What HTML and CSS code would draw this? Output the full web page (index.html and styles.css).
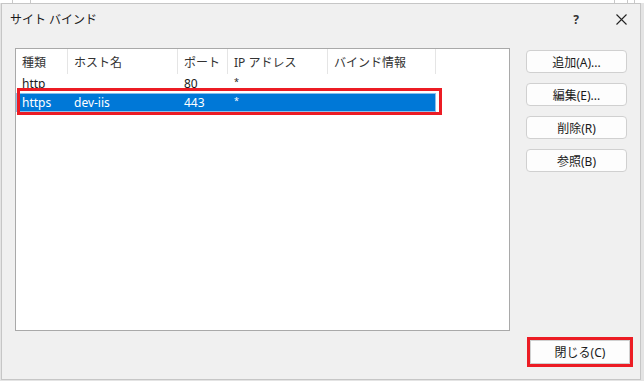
FILE: index.html
```html
<!DOCTYPE html>
<html lang="ja">
<head>
    <meta charset="UTF-8">
    <title>サイト バインド</title>
    <link rel="stylesheet" href="styles.css">
</head>
<body>
    <div class="backdrop">
        <span class="line l1"></span>
        <span class="line l2"></span>
        <span class="line l3"></span>
        <span class="line l4"></span>
        <span class="line l5"></span>
    </div>
    <div class="dialog">
        <div class="titlebar">
            <span class="title">サイト バインド</span>
            <span class="help">?</span>
            <span class="close">
                <svg width="11" height="11" viewBox="0 0 11 11"><path d="M0.5 0.5 L10.5 10.5 M10.5 0.5 L0.5 10.5" stroke="#222" stroke-width="1.1" fill="none"/></svg>
            </span>
        </div>

        <div class="main">
            <div class="listbox">
                <div class="row header">
                    <div class="cell">種類</div>
                    <div class="cell">ホスト名</div>
                    <div class="cell">ポート</div>
                    <div class="cell">IP アドレス</div>
                    <div class="cell">バインド情報</div>
                </div>
                <div class="row">
                    <div class="cell">http</div>
                    <div class="cell"></div>
                    <div class="cell">80</div>
                    <div class="cell"><span class="star">*</span></div>
                    <div class="cell"></div>
                </div>
                <div class="row selected">
                    <div class="cell">https</div>
                    <div class="cell">dev-iis</div>
                    <div class="cell">443</div>
                    <div class="cell"><span class="star">*</span></div>
                    <div class="cell"></div>
                </div>
                <!-- red callout around the selected row -->
                <div class="mark"></div>
            </div>

            <div class="actions">
                <button class="btn">追加(A)...</button>
                <button class="btn">編集(E)...</button>
                <button class="btn">削除(R)</button>
                <button class="btn">参照(B)</button>
            </div>
        </div>

        <div class="footer">
            <button class="btn btn-close">閉じる(C)</button>
        </div>
    </div>
</body>
</html>
```

FILE: styles.css
```css
body {
    margin: 0;
    background-color: #e4e4e4;
    font-family: "Noto Sans", "Noto Sans CJK JP", sans-serif;
    font-size: 12px;
    color: #1a1a1a;
}
.backdrop {
    position: relative;
    height: 3px;
    background-color: #fff;
}
.line {
    position: absolute;
    top: 0;
    width: 1px;
    height: 3px;
    background-color: #c8c8c8;
}
.l1 { left: 12px; }
.l2 { left: 30px; }
.l3 { left: 614px; }
.l4 { left: 627px; }
.l5 { left: 634px; }
.dialog {
    box-sizing: border-box;
    width: 640px;
    height: 377px;
    margin-left: 1px;
    border: 1px solid #c6c6c6;
    background-color: #f0f0f0;
    display: flex;
    flex-direction: column;
}
.titlebar {
    height: 30px;
    display: flex;
    align-items: center;
    padding-left: 8px;
}
.title {
    flex: 1;
    color: #1a1a1a;
}
.help {
    width: 20px;
    text-align: center;
    font-weight: bold;
    color: #333;
    margin-right: 30px;
}
.close {
    display: flex;
    width: 11px;
    margin-right: 13px;
}
.main {
    display: flex;
    margin-top: 14px;
    padding-left: 13px;
}
.listbox {
    position: relative;
    box-sizing: border-box;
    width: 495px;
    height: 283px;
    border: 1px solid #a9a9a9;
    background-color: #fff;
}
.row {
    display: grid;
    grid-template-columns: 52px 110px 50px 100px 108px;
    width: 420px;
    height: 19px;
    align-items: center;
}
.cell {
    padding-left: 6px;
    white-space: nowrap;
}
.star {
    font-size: 9px;
    vertical-align: 3px;
}
.row.header {
    height: 25px;
    align-items: stretch;
}
.header .cell {
    display: flex;
    align-items: center;
    border-right: 1px solid #e5e5e5;
    color: #333;
}
.row.selected {
    background-color: #0078d7;
    color: #fff;
    box-shadow: inset 0 0 0 1px #8cc0ec;
}
.mark {
    position: absolute;
    left: 1px;
    top: 39px;
    width: 419px;
    height: 21px;
    border: 3px solid #ec1c24;
}
.actions {
    display: flex;
    flex-direction: column;
    gap: 10px;
    margin-top: 2px;
    margin-left: 16px;
}
.btn {
    box-sizing: border-box;
    width: 101px;
    height: 23px;
    padding: 0;
    border: 1px solid #d0d0d0;
    border-radius: 4px;
    background-color: #fdfdfd;
    font-family: inherit;
    font-size: 12px;
    color: #1a1a1a;
}
.footer {
    display: flex;
    justify-content: flex-end;
    padding-top: 9px;
    padding-right: 10px;
}
.btn-close {
    width: 100px;
    height: 24px;
    border-radius: 0;
    outline: 3px solid #ec1c24;
}
```
